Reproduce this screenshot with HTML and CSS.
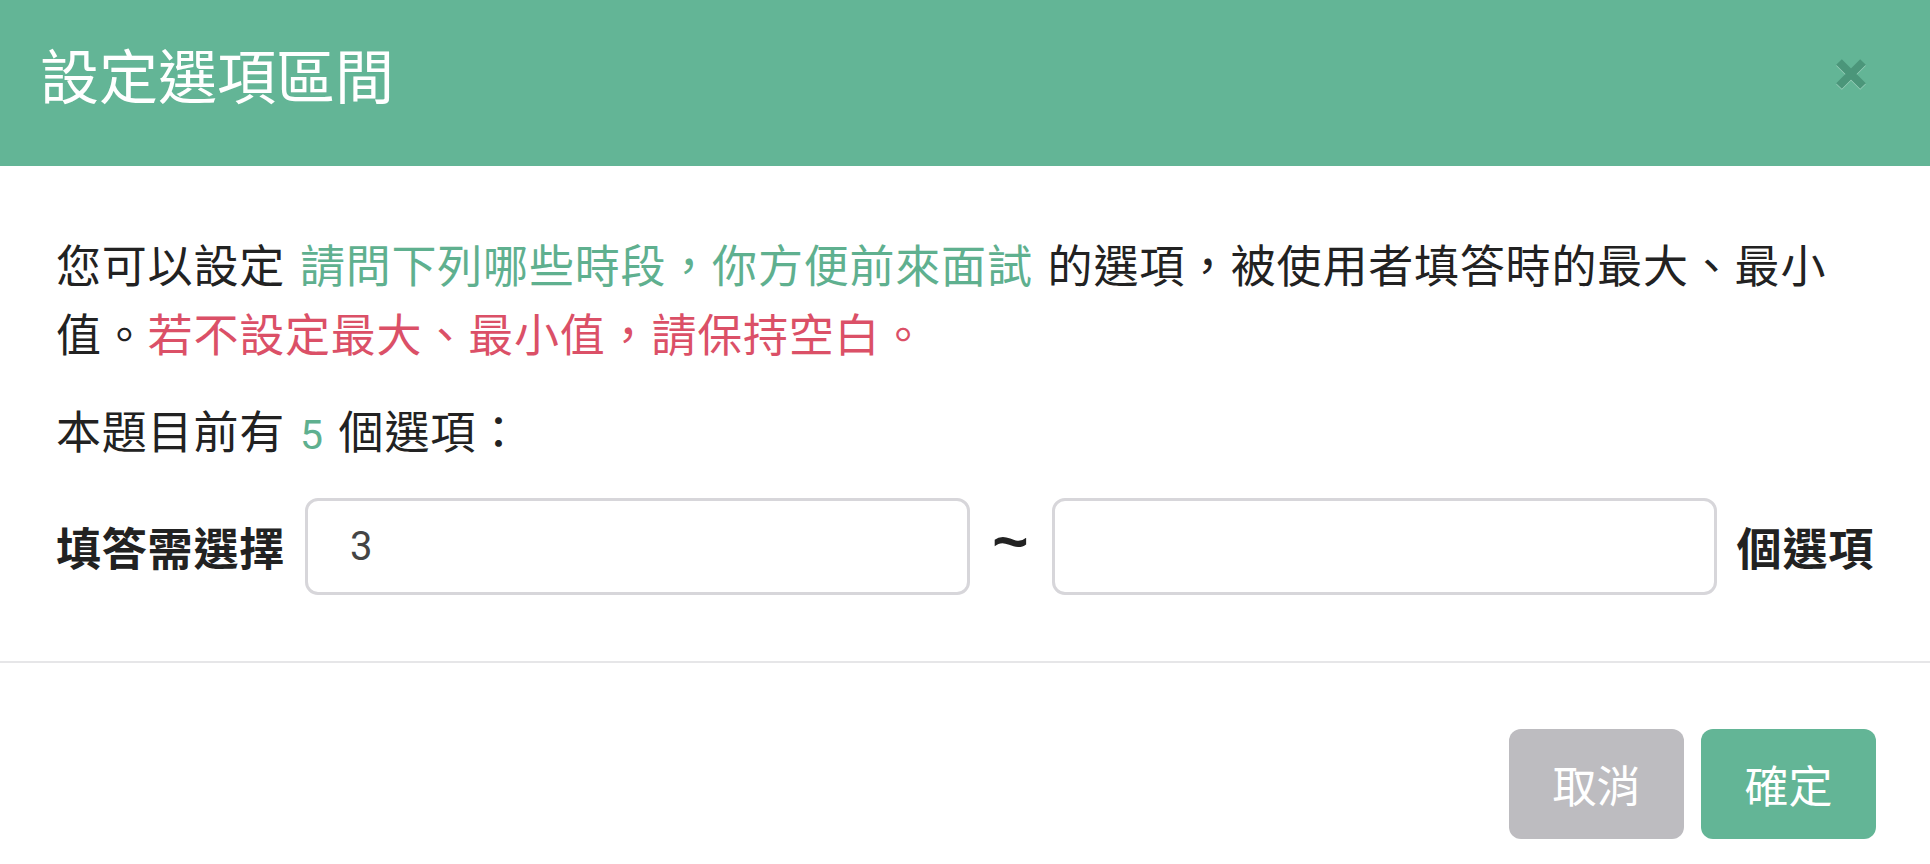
FILE: index.html
```html
<!DOCTYPE html>
<html lang="zh-Hant">
<head>
<meta charset="utf-8">
<title>設定選項區間</title>
<link rel="stylesheet" href="styles.css">
</head>
<body>
<div class="modal">
  <header class="modal-header">
    <h2 class="modal-title">設定選項區間</h2>
    <button class="close" type="button" aria-label="Close">
      <svg viewBox="0 0 32 32" width="32" height="32" aria-hidden="true">
        <path d="M4 4 L28 28 M28 4 L4 28" stroke="currentColor" stroke-width="8" stroke-linecap="butt" fill="none"/>
      </svg>
    </button>
  </header>
  <div class="modal-body">
    <p class="desc">您可以設定 <span class="hl">請問下列哪些時段，你方便前來面試</span> 的選項，被使用者填答時的最大、最小值。<span class="warn">若不設定最大、最小值，請保持空白。</span></p>
    <p class="count">本題目前有 <span class="num">5</span> 個選項：</p>
    <div class="range-row">
      <span class="range-label">填答需選擇</span>
      <input class="range-input" type="text" value="3">
      <span class="tilde">~</span>
      <input class="range-input" type="text" value="">
      <span class="range-label">個選項</span>
    </div>
  </div>
  <footer class="modal-footer">
    <button class="btn btn-cancel" type="button">取消</button>
    <button class="btn btn-ok" type="button">確定</button>
  </footer>
</div>
</body>
</html>
```

FILE: styles.css
```css
* {
  box-sizing: border-box;
}

html, body {
  margin: 0;
  padding: 0;
  background: #ffffff;
}

body {
  font-family: "Noto Sans CJK TC", "Noto Sans CJK SC", sans-serif;
  color: #222222;
}

.modal {
  width: 100%;
  background: #ffffff;
}

.modal-header {
  height: 166px;
  background: #63b596;
  padding: 33px 63px 52px 40px;
  display: flex;
  align-items: center;
  justify-content: space-between;
}

.modal-title {
  margin: 0;
  font-size: 59px;
  line-height: 81px;
  font-weight: 400;
  color: #ffffff;
}

.close {
  width: 32px;
  height: 32px;
  padding: 0;
  border: 0;
  background: transparent;
  color: #4b967a;
  cursor: pointer;
  display: flex;
  filter: drop-shadow(0 1px 0 rgba(255, 255, 255, 0.35));
}

.close svg {
  display: block;
}

.modal-body {
  padding: 63px 56px 66px;
  font-size: 45px;
  letter-spacing: 0.8px;
  word-spacing: 4px;
}

.desc {
  margin: 0;
  line-height: 69px;
}

.hl {
  color: #5fb08f;
}

.warn {
  color: #db5067;
}

.count {
  margin: 28px 0 0;
  line-height: 69px;
  height: 69px;
}

.num {
  font-family: Roboto, "Liberation Sans", sans-serif;
  font-size: 41px;
  line-height: 1;
  color: #5fb08f;
}

.range-row {
  margin-top: 34px;
  display: grid;
  grid-template-columns: auto 1fr 42px 1fr auto;
  column-gap: 20px;
  align-items: center;
}

.range-label {
  font-weight: 700;
  line-height: 60px;
  white-space: nowrap;
}

.range-input {
  width: 100%;
  min-width: 0;
  height: 97px;
  border: 3px solid #d7d6da;
  border-radius: 13px;
  padding: 0 42px;
  font-family: Roboto, "Liberation Sans", sans-serif;
  font-size: 40px;
  color: #444444;
  background: #ffffff;
  outline: none;
}

.tilde {
  font-family: "Liberation Sans", sans-serif;
  font-weight: 700;
  font-size: 62px;
  line-height: 60px;
  padding-bottom: 12px;
  text-align: center;
  color: #222222;
}

.modal-footer {
  border-top: 2px solid #e6e6e8;
  padding: 66px 54px 25px;
  display: flex;
  justify-content: flex-end;
  gap: 17px;
}

.btn {
  height: 110px;
  width: 175px;
  border: 0;
  border-radius: 12px;
  font-family: "Noto Sans CJK TC", "Noto Sans CJK SC", sans-serif;
  font-size: 44px;
  color: #ffffff;
  cursor: pointer;
  padding: 0;
}

.btn-cancel {
  background: #bdbcc0;
}

.btn-ok {
  background: #63b596;
}
```
